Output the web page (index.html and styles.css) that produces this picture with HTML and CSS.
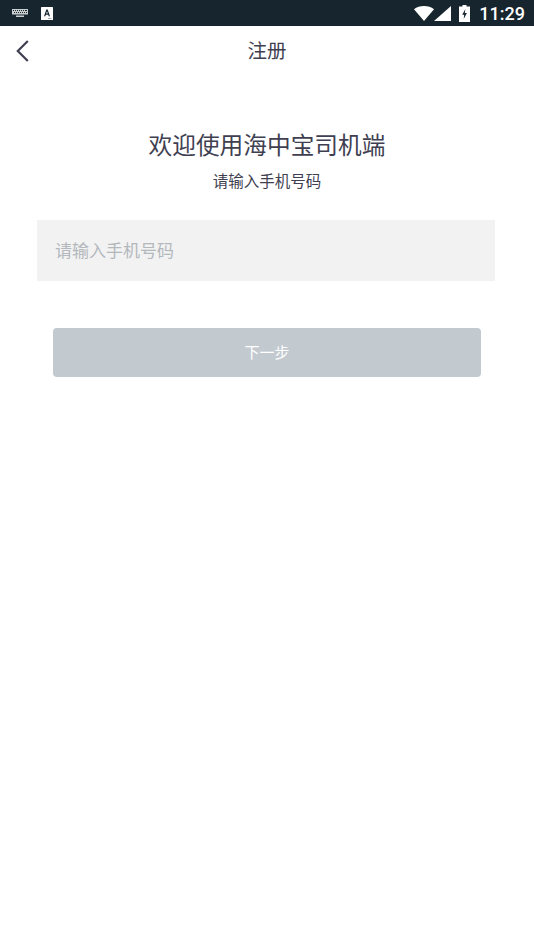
FILE: index.html
```html
<!DOCTYPE html>
<html lang="zh-CN">
<head>
  <meta charset="UTF-8" />
  <meta name="viewport" content="width=device-width, initial-scale=1.0"/>
  <title>注册</title>
  <link rel="stylesheet" href="styles.css">
</head>
<body>

  <div class="status-bar">
    <div class="status-left">
      <svg class="icon-keyboard" width="16" height="8" viewBox="0 0 16 8">
        <path d="M0 0h16v5.500H0z" fill="#c9ced1"/>
        <path d="M1 1h1v1H1zM3 1h1v1H3zM5 1h1v1H5zM7 1h1v1H7zM9 1h1v1H9zM11 1h1v1h-1zM13 1h2v1h-2zM2 3h1v1H2zM4 3h1v1H4zM6 3h1v1H6zM8 3h1v1H8zM10 3h1v1h-1zM12 3h1v1h-1zM14 3h1v1h-1z" fill="#17252e"/>
        <path d="M4 6.500h8V8H4z" fill="#c9ced1"/>
      </svg>
      <svg class="icon-a" width="12" height="13" viewBox="0 0 12 13">
        <rect width="12" height="13" rx="0.5" fill="#fff"/>
        <path d="M3 9.200 5.300 2.600h1.400L9 9.200H7.700L7.200 7.700H4.800L4.300 9.200zM5.200 6.600h1.600L6 4.200z" fill="#17252e"/>
        <path d="M7 11h3.400v.8H7z" fill="#8a9297"/>
      </svg>
    </div>
    <div class="status-right">
      <svg width="20" height="15" viewBox="0 0 20 15">
        <path d="M0 3.200C2.700 1.100 6.200 0 10 0s7.300 1.100 10 3.200L10 15z" fill="#fff"/>
      </svg>
      <svg width="17" height="15" viewBox="0 0 17 15">
        <path d="M17 0v15H0z" fill="#fff"/>
      </svg>
      <svg class="icon-battery" width="11" height="17" viewBox="0 0 11 17">
        <path d="M3.500 0h4v1.500H11V17H0V1.500h3.500z" fill="#fff"/>
        <path d="M6.400 4 3.200 9.700h2L4.700 14l3.200-6H5.800z" fill="#17252e"/>
      </svg>
      <span class="clock">11:29</span>
    </div>
  </div>

  <div class="nav-bar">
    <svg class="back" width="13" height="22" viewBox="0 0 13 22">
      <path d="M11.800 1 1.800 11l10 10" fill="none" stroke="#3f3f52" stroke-width="2.200"/>
    </svg>
    <span class="nav-title">注册</span>
  </div>

  <div class="welcome">
    <h2>欢迎使用海中宝司机端</h2>
    <p>请输入手机号码</p>
  </div>

  <div class="phone-box">
    <input class="phone-input" type="tel" placeholder="请输入手机号码">
  </div>

  <button class="next-btn">下一步</button>

</body>
</html>
```

FILE: styles.css
```css
:root {
  --bar-color: #17252e;
  --text-color: #3f3f52;
  --field-bg: #f2f2f2;
  --btn-bg: #c2c9cf;
  --hint-color: #b3b8bd;
}

body {
  margin: 0;
  background-color: #fff;
  color: var(--text-color);
  font-family: "Noto Sans CJK SC", "Noto Sans", sans-serif;
}

.status-bar {
  height: 26px;
  background-color: var(--bar-color);
  display: flex;
  align-items: center;
  justify-content: space-between;
  padding: 0 9px 0 12px;
}

.status-left,
.status-right {
  display: flex;
  align-items: center;
}

.icon-keyboard {
  margin-right: 13px;
}

.status-right .icon-battery {
  margin-left: 8px;
  margin-right: 9px;
}

.clock {
  color: #fff;
  font-family: Roboto, sans-serif;
  font-size: 18px;
  font-weight: 500;
}

.nav-bar {
  height: 50px;
  position: relative;
  display: flex;
  align-items: center;
  justify-content: center;
  padding-bottom: 3px;
  box-sizing: border-box;
}

.back {
  position: absolute;
  left: 16px;
  top: 14px;
}

.nav-title {
  font-size: 19.5px;
}

.welcome {
  text-align: center;
  margin-top: 50px;
}

.welcome h2 {
  margin: 0;
  font-size: 23.7px;
  font-weight: 400;
  line-height: 36px;
}

.welcome p {
  margin: 8px 0 0;
  font-size: 15.5px;
  line-height: 20px;
}

.phone-box {
  margin: 30px 39px 0 37px;
  height: 61px;
  background-color: var(--field-bg);
  display: flex;
  align-items: center;
  padding: 0 18px 2px;
  box-sizing: border-box;
}

.phone-input {
  width: 100%;
  border: none;
  outline: none;
  padding: 0;
  background: transparent;
  font-family: inherit;
  font-size: 17px;
  color: var(--text-color);
}

.phone-input::placeholder {
  color: var(--hint-color);
  opacity: 1;
}

.next-btn {
  display: block;
  width: 428px;
  height: 49px;
  margin: 47px 0 0 53px;
  padding: 0 0 2px;
  border: none;
  border-radius: 4px;
  background-color: var(--btn-bg);
  color: #fff;
  font-family: inherit;
  font-size: 15px;
}
```
